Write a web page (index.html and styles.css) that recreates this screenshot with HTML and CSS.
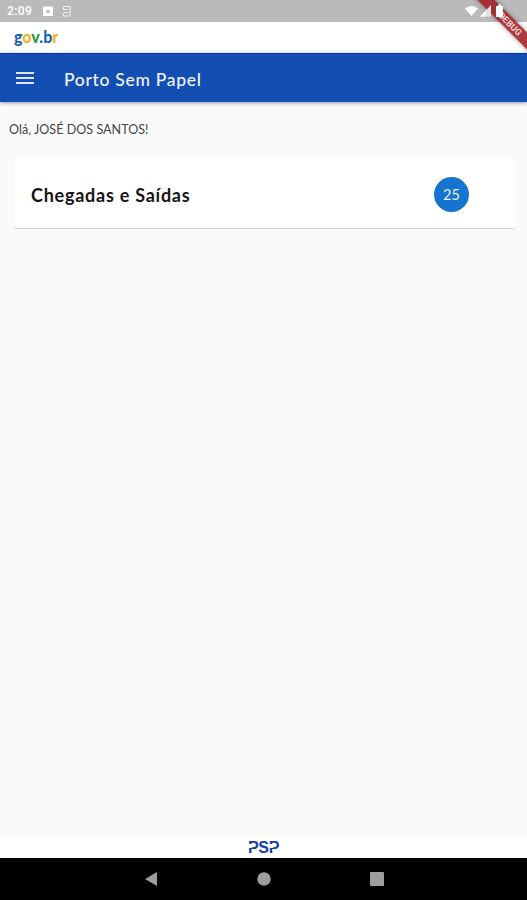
FILE: index.html
```
<!DOCTYPE html>
<html lang="pt-BR">
<head>
    <meta charset="UTF-8">
    <title>Porto Sem Papel</title>
    <link rel="stylesheet" href="styles.css">
</head>
<body>
    <div class="status-bar">
        <span class="clock">2:09</span>
        <svg class="status-left" width="30" height="12" viewBox="0 0 30 12">
            <rect x="1" y="1.500" width="10" height="9.500" rx="1" fill="#fff"/>
            <path d="M4.500 5h3v3h-3z" fill="#bababa"/>
            <path d="M21.500 1.500h6.500v9.500h-6.500v-3M21.500 1.500v3h4M22 7.500h4" fill="none" stroke="#eee" stroke-width="1.2"/>
        </svg>
        <svg class="status-right" width="42" height="14" viewBox="0 0 42 14">
            <path d="M0 4.500Q6.500-.5 13 4.500L6.500 12z" fill="#fff"/>
            <path d="M15 12.500L26 1v11.500z" fill="#e4e4e4"/>
            <path d="M15 12.500l6-6v6z" fill="#fff"/>
            <path d="M31 2h2V.5h3V2h2v11h-7z" fill="#fff"/>
        </svg>
    </div>

    <div class="brand">
        <span class="govbr"><b class="blue">g</b><b class="yellow">o</b><b class="green">v</b><b class="blue">.b</b><b class="yellow">r</b></span>
    </div>

    <header class="app-bar">
        <svg class="menu" width="18" height="12" viewBox="0 0 18 12">
            <path d="M0 1h18M0 6h18M0 11h18" stroke="#dfe3fb" stroke-width="2"/>
        </svg>
        <h1>Porto Sem Papel</h1>
    </header>

    <main>
        <p class="greeting">Olá, JOSÉ DOS SANTOS!</p>
        <div class="card">
            <h2>Chegadas e Saídas</h2>
            <span class="count">25</span>
        </div>
    </main>

    <footer class="footer">
        <span class="psp"><span class="open">P</span>S<span class="open">P</span></span>
    </footer>

    <nav class="nav-bar">
        <svg width="14" height="16" viewBox="0 0 14 16"><path d="M13 1v14L1 8z" fill="#9e9e9e"/></svg>
        <svg width="14" height="14" viewBox="0 0 14 14"><circle cx="7" cy="7" r="6.700" fill="#9e9e9e"/></svg>
        <svg width="14" height="14" viewBox="0 0 14 14"><rect width="14" height="14" rx="1" fill="#9e9e9e"/></svg>
    </nav>

    <div class="debug"><span>DEBUG</span></div>
</body>
</html>
```

FILE: styles.css
```
body {
    margin: 0;
    height: 900px;
    position: relative;
    overflow: hidden;
    display: flex;
    flex-direction: column;
    background-color: #fafafa;
    font-family: Lato, sans-serif;
}

h1, h2, p {
    margin: 0;
    white-space: nowrap;
}

.status-bar {
    height: 22px;
    display: flex;
    align-items: center;
    background-color: #bababa;
    color: #fff;
}

.clock {
    width: 35px;
    padding-left: 7px;
    font: 500 12px Roboto, sans-serif;
    letter-spacing: 0.4px;
}

.status-right {
    position: relative;
    z-index: 2;
    margin-left: auto;
    margin-right: 20px;
}

.brand {
    height: 31px;
    background-color: #fff;
}

.govbr {
    display: block;
    padding: 5px 0 0 14px;
    font: 16px/20px Lato, sans-serif;
    letter-spacing: 0;
}

.govbr b {
    font-weight: 900;
}

.blue {
    color: #1c63b7;
}

.yellow {
    color: #f9b020;
}

.green {
    color: #219a3c;
}

.app-bar {
    height: 49px;
    display: flex;
    align-items: center;
    box-sizing: border-box;
    padding: 2px 0 0 16px;
    border-top: 1px solid #0a35a8;
    background-color: #134fb3;
    box-shadow: 0 1px 4px rgba(0, 0, 0, 0.4);
    color: #f2f4ff;
}

.menu {
    margin-top: -3px;
}

.app-bar h1 {
    margin-left: 30px;
    font: 500 17.500px Lato, sans-serif;
    letter-spacing: 0.7px;
}

main {
    flex: 1;
}

.greeting {
    padding: 19px 0 0 9px;
    font: 12.500px/18px Lato, sans-serif;
    letter-spacing: 0.05px;
    color: #444;
}

.card {
    height: 70px;
    margin: 19px 11px 0 14px;
    padding: 2px 47px 0 17px;
    display: flex;
    align-items: center;
    justify-content: space-between;
    box-sizing: border-box;
    border-radius: 3px;
    background-color: #fff;
    box-shadow: 0 1px 1px rgba(0, 0, 0, 0.16);
}

.card h2 {
    padding-top: 2px;
    font: 700 18px Lato, sans-serif;
    letter-spacing: 0.75px;
    color: #151515;
}

.count {
    width: 35px;
    height: 35px;
    border-radius: 50%;
    background-color: #1674d1;
    color: #e8f2ff;
    font: 14.500px/36px Lato, sans-serif;
    text-align: center;
}

.footer {
    height: 22px;
    display: flex;
    justify-content: center;
    background-color: #fff;
}

.psp {
    font: 700 16px/23px "Liberation Sans", sans-serif;
    letter-spacing: -0.4px;
    color: #153fab;
}

.open {
    position: relative;
}

/* clears the upper stem of each P */
.open::after {
    content: "";
    position: absolute;
    left: 0;
    top: 5px;
    width: 4px;
    height: 4px;
    background-color: #fff;
}

.nav-bar {
    height: 42px;
    display: flex;
    align-items: center;
    justify-content: space-between;
    box-sizing: border-box;
    padding: 0 143px 0 144px;
    background-color: #000;
}

.debug {
    position: absolute;
    z-index: 1;
    top: 0;
    right: 0;
    width: 70px;
    height: 70px;
    overflow: hidden;
}

.debug span {
    position: absolute;
    left: -2px;
    top: 18px;
    width: 110px;
    height: 12px;
    transform: rotate(45deg);
    background-color: rgba(160, 30, 35, 0.88);
    box-shadow: 0 0 5px rgba(0, 0, 0, 0.4);
    color: #f0d5d5;
    font: 700 9px/12px Roboto, sans-serif;
    text-align: center;
}
```
